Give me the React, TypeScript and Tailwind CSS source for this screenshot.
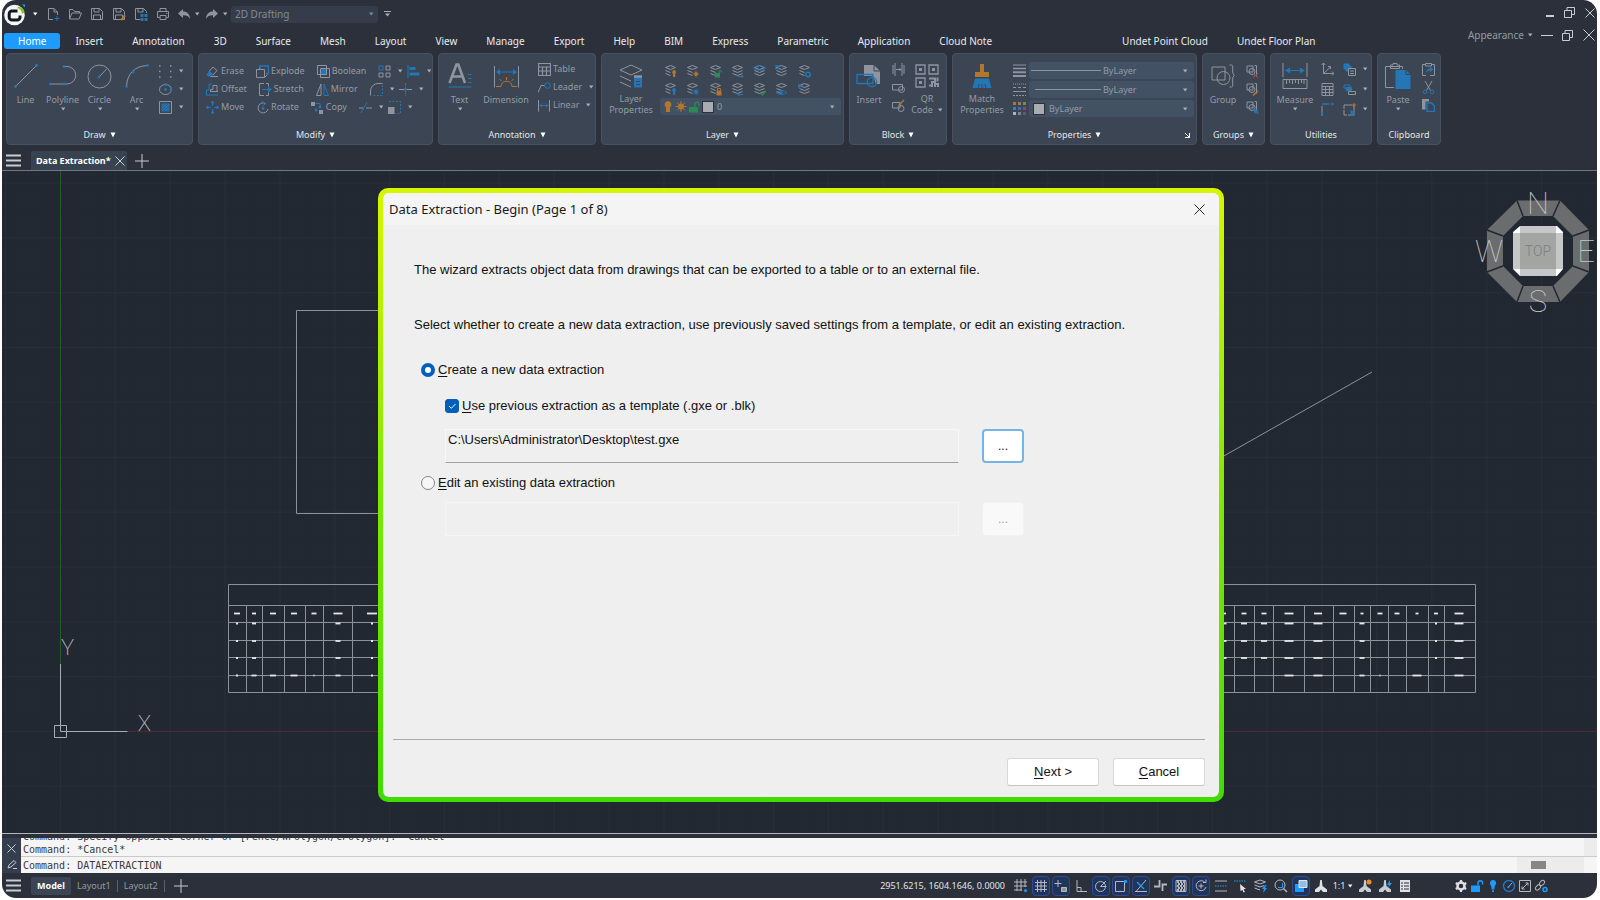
import React, { useState } from "react";
import clsx from "clsx";

const GRAY = "#8f959e";
const BLUE = "#2476b5";
const ORANGE = "#b3762e";
const GREEN = "#2c8a54";
const LIGHT = "#c9ccd1";
const AZURE = "#1e9bff";

interface SvgProps {
  w: number;
  h: number;
  stroke?: string;
  sw?: number;
  className?: string;
  children: React.ReactNode;
}

const Svg = ({ w, h, stroke = GRAY, sw = 1, className, children }: SvgProps) => (
  <svg
    width={w}
    height={h}
    viewBox={`0 0 ${w} ${h}`}
    fill="none"
    stroke={stroke}
    strokeWidth={sw}
    className={clsx("shrink-0", className)}
    aria-hidden="true"
  >
    {children}
  </svg>
);

const Caret = ({ fill = "#a9aeb6" }: { fill?: string }) => (
  <Svg w={6} h={4} stroke="none">
    <path d="M1 0.5h4.4L3.2 3.5z" fill={fill} />
  </Svg>
);

const Hamburger = () => (
  <Svg w={15} h={13} stroke={LIGHT} sw={2}>
    <path d="M0 1.5h15M0 6.5h15M0 11.5h15" />
  </Svg>
);

const Plus = () => (
  <Svg w={14} h={14} stroke={LIGHT}>
    <path d="M7 0v14M0 7h14" />
  </Svg>
);

const Cross = ({ size = 11, stroke = LIGHT }: { size?: number; stroke?: string }) => (
  <Svg w={size} h={size} stroke={stroke}>
    <path d={`M.5 .5L${size - 0.5} ${size - 0.5}M${size - 0.5} .5L.5 ${size - 0.5}`} />
  </Svg>
);

/* ---------- Title bar icons ---------- */

const Logo = () => (
  <Svg w={22} h={24} stroke="none">
    <circle cx="10.5" cy="13" r="10.3" fill="#f4f6f7" />
    <path d="M13.500 9H8a2.800 2.800 0 0 0-2.800 2.800v3.400A2.800 2.800 0 0 0 8 18h5.200a2.800 2.800 0 0 0 2.800-2.800V13.500" stroke="#14181f" strokeWidth="3" />
    <path d="M13 6c3 .6 4.800 2.500 5 6l2.500-1.800C20.300 7.500 17.500 5 14.500 4.800z" fill="#86c61c" />
    <path d="M18 2.500h3v3z" fill={AZURE} />
  </Svg>
);

const FLOPPY = "M1.500 1.500h8l3 3v8h-11zM4 1.500v3.500h5v-3.500M3.500 12.500V8h7v4.500";

const quickIcons: { label: string; icon: React.ReactNode }[] = [
  {
    label: "New",
    icon: (
      <>
        <path d="M7 12.500H2.500v-11h5.500l3.500 3.500v3M8 1.500V5h3.500" />
        <path d="M11 9v5M8.500 11.500h5" stroke={BLUE} />
      </>
    ),
  },
  { label: "Open", icon: <path d="M1.500 12V2.500h3.500l1.500 2h5V6M1.500 12l2.500-6h9.500l-2.500 6z" /> },
  { label: "Save", icon: <path d={FLOPPY} /> },
  {
    label: "Save as",
    icon: (
      <>
        <path d={FLOPPY} />
        <path d="M9 13l4-4.500" stroke={ORANGE} strokeWidth="2" />
      </>
    ),
  },
  {
    label: "Save all",
    icon: (
      <>
        <path d="M6 12.500H1.500v-11h8l3 3V6M4 1.500v3.500h5v-3.500" />
        <path d="M6.500 7h3v3h-3zM10.500 7h3v3h-3zM6.500 11h3v3h-3zM10.500 11h3v3h-3z" fill={BLUE} stroke="none" />
      </>
    ),
  },
  {
    label: "Print",
    icon: (
      <>
        <path d="M4 4.500v-3h6v3M3.500 10.500h-2v-6h11v6h-2" />
        <path d="M4 8.500h6v4H4z" />
        <path d="M10 6.500h1.500" stroke={ORANGE} />
      </>
    ),
  },
];

const Restore = () => (
  <Svg w={11} h={11} stroke={LIGHT}>
    <path d="M.5 3.500h7v7h-7zM3 3.500V.5h7.500v7H7.500" />
  </Svg>
);

/* ---------- Ribbon icons ---------- */

const dot = (x: number, y: number) => <circle cx={x} cy={y} r="1.400" fill={BLUE} stroke="none" key={`${x}-${y}`} />;

const LineIcon = () => (
  <Svg w={24} h={24}>
    <path d="M1.500 22.500L22.500 1.500" />
    {dot(1.5, 22.5)}
    {dot(22.5, 1.5)}
  </Svg>
);

const PolylineIcon = () => (
  <Svg w={28} h={22}>
    <path d="M15 1.500h3a8.700 8.700 0 0 1 0 17.500h-3M1.500 19H15" />
    {dot(15, 1.5)}
    {dot(1.5, 19)}
    {dot(15, 19)}
  </Svg>
);

const CircleIcon = () => (
  <Svg w={25} h={25}>
    <circle cx="12.500" cy="12.500" r="11.500" />
    <path d="M12.500 12.500l7.500-8" />
    {dot(12, 13)}
  </Svg>
);

const ArcIcon = () => (
  <Svg w={24} h={24}>
    <path d="M1.500 22.500C2 10 9.500 2 22.500 1.500" />
    {dot(1.5, 22.5)}
    {dot(8, 8)}
    {dot(22.5, 1.5)}
  </Svg>
);

const TextIcon = () => (
  <Svg w={24} h={26} stroke={BLUE}>
    <path d="M1.500 20L8.500 1.500h1.800L17 20M4 13.500h11" stroke={GRAY} strokeWidth="2.600" />
    <path d="M20 11.500h3.500M20 15.500h3.500M20 19.500h3.500M.5 24h23" />
  </Svg>
);

const DimensionIcon = () => (
  <Svg w={25} h={24}>
    <path d="M.5 2v21.500M24.500 2v21.500" />
    <path d="M3 8h19" stroke={BLUE} />
    <path d="M2 8l4-3v6zM23 8l-4-3v6z" fill={BLUE} stroke="none" />
    <path d="M2 22.500h5c0-7 11-7 11 0h5M12.500 13v3M5.500 15l2 2M19.500 15l-2 2" stroke={ORANGE} />
  </Svg>
);

const LayersIcon = () => (
  <Svg w={24} h={24}>
    <path d="M12 1l11 5-11 5L1 6zM1 12l11 5M1 18l11 5" />
    <path d="M15 12.500h8v11h-8z" fill={BLUE} stroke="none" />
    <path d="M15 12.500h8" strokeWidth="2.500" />
    <path d="M17 17.500h4M17 20.500h4" stroke="#3b4554" />
  </Svg>
);

const InsertIcon = () => (
  <Svg w={26} h={24}>
    <path d="M8 1h10l6 6v13h-4l-3-8H8z" fill={GRAY} stroke="none" />
    <path d="M18 1v6h6" stroke="#3b4554" />
    <path d="M1 10.500h16v9H1z" stroke={BLUE} strokeWidth="1.300" />
    <circle cx="16" cy="18" r="4.700" stroke={BLUE} strokeWidth="1.300" />
  </Svg>
);

const QrIcon = () => (
  <Svg w={24} h={24}>
    <path d="M1 1h9v9H1zM14 1h9v9h-9zM1 14h9v9H1z" strokeWidth="1.300" />
    <path d="M4 4h3v3H4zM17 4h3v3h-3zM4 17h3v3H4z" fill={GRAY} stroke="none" />
    <path d="M14 14.500h6v3.500h-3v5M22.500 13.500v4M14 21.500h2M20 23v-3h3v3" strokeWidth="2" />
  </Svg>
);

const BrushIcon = () => (
  <Svg w={20} h={24} stroke="none">
    <path d="M8 0h4v8h5v5H3V8h5z" fill={ORANGE} />
    <path d="M3 14.500h14l2.500 9.500H.5z" fill={BLUE} />
    <path d="M6 24l1-4M10 24v-4M14 24l-1-4" stroke="#3b4554" />
  </Svg>
);

const GroupIcon = () => (
  <Svg w={24} h={24}>
    <path d="M1 3h13v13H1z" />
    <circle cx="12.500" cy="14" r="6.500" />
    <path d="M18.500 1h2c1 0 1.200.5 1.200 1.500V9l1.500 2.500-1.500 2.500v7.500c0 1-.2 1.500-1.200 1.500h-2" />
  </Svg>
);

const MeasureIcon = () => (
  <Svg w={26} h={26}>
    <path d="M1 0v14M25 0v14M1 16.500h24v9H1zM4.500 17v4M7.500 17v3M10.500 17v4M13.500 17v3M16.500 17v4M19.500 17v3M22 17v4" />
    <path d="M4 7.500h18" stroke={BLUE} />
    <path d="M3 7.500l5-3v6zM23 7.500l-5-3v6z" fill={BLUE} stroke="none" />
  </Svg>
);

const PasteIcon = () => (
  <Svg w={26} h={26}>
    <path d="M9 24.500H.5v-21h17V6" />
    <path d="M5.500 2h2.500v-1.500h4V2h2.500v3.500h-9z" />
    <path d="M10.500 7h10.500l4.500 4.500V26h-15z" fill={BLUE} stroke="none" />
    <path d="M21 7v4.500h4.500" stroke="#3b4554" />
  </Svg>
);

/* small 13px icons */
const small: Record<string, React.ReactNode> = {
  points: (
    <path
      d="M0 1h1.500M11 1h1.500M0 6.500h1.500M11 6.500h1.500M0 12h1.500M11 12h1.500"
      strokeWidth="1.500"
    />
  ),
  ellipse: (
    <>
      <ellipse cx="6.500" cy="6.500" rx="6" ry="5" />
      {dot(6.5, 6.5)}
      {dot(6.5, 1.5)}
      {dot(12, 6.5)}
    </>
  ),
  hatch: (
    <>
      <path d="M.5 .5h12v12H.5z" />
      <path d="M2.500 2.500h8v8h-8z" fill={BLUE} stroke="none" />
      <path d="M3 6l3-3M3 9l6-6M5 10l5-5M8 10l2-2" stroke="#3b4554" strokeWidth=".5" />
    </>
  ),
  erase: (
    <>
      <path d="M7 2l4 3.500-4 4.500-4-3.500zM4 11.500h8" />
      <path d="M3.500 6l3.500 3.500-2 2H2L.5 9.500z" fill={BLUE} stroke="none" />
    </>
  ),
  offset: (
    <>
      <path d="M4.500 8.500v-2H7v-4h4v6zM4 8.500h8" />
      <path d="M.5 12.500V7H3V1h3M.5 12H12" stroke={BLUE} />
    </>
  ),
  move: (
    <>
      <path d="M6.500 1v4M6.500 8v4M1 6.500h4M8 6.500h4" stroke={BLUE} />
      {dot(6.5, 1.5)}
      {dot(6.5, 11.5)}
      {dot(1.5, 6.5)}
      {dot(11.5, 6.5)}
    </>
  ),
  explode: (
    <>
      <path d="M.5 4.500h8v8h-8zM3.500 4V2M8.500 12.500l3-3" />
      <path d="M4 3.500V1h8.500v7.500H10" stroke={BLUE} strokeWidth="1.500" />
    </>
  ),
  stretch: (
    <>
      <path d="M5 .5H.5v12H5M7 .5h2.500v3M7 12.500h2.500v-3" />
      <path d="M3 6.500h8" stroke={BLUE} />
      <path d="M13 6.500L9 3.500v6z" fill={BLUE} stroke="none" />
    </>
  ),
  rotate: (
    <>
      <path d="M9.500 2.500A5 5 0 1 0 12 8" />
      <path d="M5.500 0l4 2.500-3 3" stroke={BLUE} />
      {dot(7, 7.5)}
    </>
  ),
  boolean: (
    <>
      <path d="M.5 .5h9v9h-9zM3.500 3.500h9v9h-9z" />
      <path d="M4.500 4.500h4v4h-4z" fill={BLUE} stroke={BLUE} />
    </>
  ),
  mirror: (
    <>
      <path d="M5 1v11.500H.5z" />
      <path d="M8 1v11.500h4.500z" stroke={BLUE} />
    </>
  ),
  copy: (
    <>
      <path d="M0 1h4v4H0zM8 9h4v4H8z" fill={GRAY} stroke="none" />
      <path d="M4.500 2.500h4.500v4" stroke={BLUE} />
      {dot(9, 6)}
      {dot(5, 9)}
    </>
  ),
  array: (
    <>
      <path d="M1 1h4v4H1z" stroke={BLUE} />
      <path d="M8 1h4v4H8zM1 8h4v4H1zM8 8h4v4H8z" />
    </>
  ),
  align: (
    <>
      <path d="M1 0v13" stroke={BLUE} />
      <path d="M2.500 2h6v3h-6zM2.500 7.500h10v3h-10z" fill={BLUE} stroke="none" />
    </>
  ),
  fillet: (
    <>
      <path d="M.5 12.500V8A7.500 7.500 0 0 1 8 .5h4.500" />
      <path d="M12.500 2v10.500H2" strokeDasharray="2 1.500" stroke={BLUE} />
    </>
  ),
  breakAt: (
    <>
      <path d="M0 6.500h13" />
      <path d="M6.500 0v13" stroke={BLUE} strokeDasharray="3 1" />
      {dot(6.5, 6.5)}
    </>
  ),
  trim: (
    <>
      <path d="M2 12L8 1" stroke={BLUE} />
      <path d="M0 7h4M7 7h6" />
    </>
  ),
  scale: (
    <>
      <path d="M1 .5h11.500v12H7" strokeDasharray="2 1.500" stroke={BLUE} />
      <path d="M0 6h6.500v7H0z" fill={GRAY} stroke="none" />
    </>
  ),
  table: <path d="M.5 .5h12v12H.5zM.5 4h12M.5 8h12M4.500 4v8.500M8.500 4v8.500" strokeWidth="1.200" />,
  leader: (
    <>
      <path d="M0 11.500l3-7 4 0" />
      <circle cx="9.500" cy="4.500" r="2.800" stroke={BLUE} />
    </>
  ),
  linear: (
    <>
      <path d="M.5 1v11.500M11.500 1v11.500" />
      <path d="M2 6.500h8M4 4.500l-2 2 2 2M8 4.500l2 2-2 2" stroke={BLUE} />
    </>
  ),
  blockArrow: <path d="M1 2v9M3 0v13M10 0v13M12 2v9M4 6.500h5M7.500 5l1.500 1.500L7.500 8" />,
  blockEdit: (
    <>
      <path d="M.5 3.500h10v5.500H.5z" />
      <circle cx="9.500" cy="8.500" r="3" />
    </>
  ),
  blockPen: (
    <>
      <path d="M.5 3.500h7.500v5.500H.5z" />
      <circle cx="9" cy="9.500" r="3" />
      <path d="M6.500 6.500L12 1" stroke={ORANGE} strokeWidth="1.500" />
    </>
  ),
  lineweight: (
    <>
      <path d="M0 1h13" />
      <path d="M0 4.500h13" strokeWidth="1.500" />
      <path d="M0 8.300h13M0 12h13" strokeWidth="2" />
    </>
  ),
  linetype: (
    <>
      <path d="M0 1h13" strokeDasharray="1 1" />
      <path d="M0 4.500h13" strokeDasharray="3 2" />
      <path d="M0 8.500h13" />
      <path d="M0 12.500h13" strokeDasharray="2 1" />
    </>
  ),
  colors: (
    <g stroke="none">
      <path d="M0 0h3v3H0z" fill="#b3762e" />
      <path d="M5 0h3v3H5z" fill="#a07a55" />
      <path d="M10 0h3v3h-3z" fill="#5f9a4b" />
      <path d="M0 5h3v3H0z" fill="#4c78b0" />
      <path d="M5 5h3v3H5z" fill="#3c6ab5" />
      <path d="M10 5h3v3h-3z" fill="#97416b" />
      <path d="M0 10h3v3H0z" fill="#b0b4ba" />
      <path d="M5 10h3v3H5z" fill="#7d838c" />
      <path d="M10 10h3v3h-3z" fill="#59606b" />
    </g>
  ),
  axes: <path d="M2.500 0v10.500H13M2.500 10.500l7-6.500M.5 2l2-2 2 2M11 8.500l2 2-2 2M7 3.500h2.500V6" />,
  calc: <path d="M1 .5h11v12H1zM1 3.500h11M1 6.500h11M1 9.500h11M4.500 3.500v9M8.500 3.500v9" />,
  corner: (
    <>
      <path d="M1 3v10" />
      <path d="M1 1h12" stroke={BLUE} strokeDasharray="7 1.500" strokeWidth="1.500" />
      <path d="M1 9v4" stroke={BLUE} strokeWidth="1.500" />
    </>
  ),
  selectAll: (
    <>
      <path d="M1 1h5v5H1zM3 3h5v5H3z" fill={BLUE} stroke={BLUE} />
      <path d="M5.500 5.500h7v7h-7z" fill="#3b4554" />
      <path d="M7 8h4M7 10.500h4" />
    </>
  ),
  selectSimilar: (
    <>
      <path d="M1 2h6v3H1z" stroke={BLUE} />
      <path d="M3 4.500h5.500v3H3z" fill={BLUE} stroke={BLUE} />
      <path d="M5.500 8.500h7v3h-7z" />
    </>
  ),
  quickSelect: (
    <>
      <path d="M1 2h10v10H1z" strokeDasharray="8 1" />
      <path d="M11 0v5M9 2h4" stroke={ORANGE} />
      <path d="M7 7l5.500 2.500-2 .8 1.500 2-1.500.7-1.300-2-1.200 1.500z" fill={BLUE} stroke="none" />
    </>
  ),
  pasteSpecial: (
    <>
      <path d="M4 12.500H.5v-11h3M10 1.500h2.500v11H8M3.500 .5h6v2.500h-6z" />
      <path d="M4 10c0-3 1.500-4.500 4-4.500V3.500l3.500 3-3.500 3V7.500C6 7.500 5 8.500 4 10z" fill={BLUE} stroke="none" />
    </>
  ),
  cut: (
    <>
      <path d="M3 0l5.500 9.500M10 0L4.500 9.500" />
      <circle cx="3" cy="10.800" r="1.800" stroke={BLUE} />
      <circle cx="10" cy="10.800" r="1.800" stroke={BLUE} />
    </>
  ),
  copyClip: (
    <>
      <path d="M0 0h7v2.500H3.500v8H0z" fill={GRAY} stroke="none" />
      <path d="M5 4h4.500L12.500 7v5.500H5z" stroke={BLUE} strokeWidth="1.500" />
    </>
  ),
};

const MINI_GROUP = "M1 1h6v6H1zM8.500 .5h2v10h-2";

const groupIcons = [
  <path d="M7 8l5 5M12 8l-5 5" stroke="#a8483f" key="x" />,
  <path d="M7 12.500l5-4.500" stroke={ORANGE} strokeWidth="1.500" key="e" />,
  <path d="M7 7l6 2.500-2 1 2 2-1 1-2-2-1 1.500z" fill={BLUE} stroke="none" key="s" />,
];

const Small = ({ name }: { name: string }) => (
  <Svg w={13} h={13}>
    {small[name]}
  </Svg>
);

const STACK = "M6.500 .5l5 2-5 2-5-2zM1.500 5.500l5 2 5-2M1.500 8.500l5 2 5-2";
const STACK_CUT = "M6.500 .5l5 2-5 2-5-2zM1.500 5.500l5 2M1.500 8.500l5 2";

const layerIcons: { label: string; full?: boolean; mark: React.ReactNode }[] = [
  { label: "Layer off", mark: <path d="M10 5a2.300 2.300 0 0 1 1.200 4V12H9V9A2.300 2.300 0 0 1 10 5z" fill={ORANGE} stroke="none" /> },
  { label: "Freeze layer", mark: <><circle cx="10" cy="9" r="2" fill={ORANGE} stroke="none" /><path d="M10 5.500v7M6.500 9h7" stroke={ORANGE} strokeWidth=".7" /></> },
  { label: "Unlock layer", mark: <><path d="M6 8h5v4.500H6z" fill={GREEN} stroke="none" /><path d="M10 8V6h3v2" stroke={GREEN} /></> },
  { label: "Match layer", full: true, mark: <path d="M7 11.500h5M10.500 10l1.500 1.500L10.500 13" stroke={BLUE} /> },
  { label: "Isolate layer", full: true, mark: <path d="M.5 3c3-3 9-3 12 0-3 3-9 3-12 0z" stroke={BLUE} /> },
  { label: "Previous layer", full: true, mark: <path d="M0 1h5M0 3.500h4" stroke={BLUE} strokeWidth="1.300" /> },
  { label: "Layer state", mark: <circle cx="10" cy="9.500" r="2.200" stroke={BLUE} strokeWidth="1.500" /> },
  { label: "Layer on", mark: <path d="M10 5a2.300 2.300 0 0 1 1.200 4V12H9V9A2.300 2.300 0 0 1 10 5z" fill={BLUE} stroke="none" /> },
  { label: "Thaw layer", mark: <><circle cx="10" cy="9" r="2" fill={BLUE} stroke="none" /><path d="M10 5.500v7M6.500 9h7M7.500 6.500l5 5M12.500 6.500l-5 5" stroke={BLUE} strokeWidth=".7" /></> },
  { label: "Lock layer", mark: <><path d="M7.500 7.500h5v5h-5z" fill={ORANGE} stroke="none" /><path d="M8.500 7.500V5.500h3v2" stroke={ORANGE} /></> },
  { label: "Change to current layer", full: true, mark: <path d="M7 11.500h5M8.500 10L7 11.500 8.500 13" stroke={BLUE} /> },
  { label: "Make current", full: true, mark: <path d="M7.500 10l2 2 3.500-4" stroke={GREEN} strokeWidth="1.300" /> },
  { label: "Walk layers", mark: <><path d="M1 9.500c3-2.500 8-2.500 11 0-3 2.500-8 2.500-11 0z" stroke={BLUE} /><circle cx="6.500" cy="9.500" r="1" fill={BLUE} stroke={BLUE} /></> },
  { label: "Restore layer", full: true, mark: <path d="M0 3h5M1.500 1L0 3l1.500 2" stroke={BLUE} strokeWidth="1.300" /> },
];

/* ---------- Ribbon building blocks ---------- */

interface PanelProps {
  title: string;
  width: string;
  arrow?: boolean;
  launcher?: boolean;
  children: React.ReactNode;
}

const Panel = ({ title, width, arrow = true, launcher, children }: PanelProps) => (
  <section
    className={clsx(
      "relative flex h-[92px] shrink-0 flex-col rounded-[4px] border border-[#475160] bg-[#3b4554]",
      width
    )}
  >
    <div className="flex flex-1 items-start">{children}</div>
    <button className="flex h-[18px] items-center justify-center gap-1 text-[9px] text-[#e3e5e8]">
      {title}
      {arrow && (
        <Svg w={6} h={6} stroke="none">
          <path d="M.5 .5h5L3 5.500z" fill="#fff" />
        </Svg>
      )}
    </button>
    {launcher && (
      <Svg w={5} h={5} stroke="#fff" className="absolute right-1.5 bottom-1.5">
        <path d="M0 0l4 4M4.500 0v4.500H0" />
      </Svg>
    )}
  </section>
);

interface BigButtonProps {
  icon: React.ReactNode;
  label: string;
  second?: string;
  width: string;
  caret?: boolean;
}

const BigButton = ({ icon, label, second, width, caret }: BigButtonProps) => (
  <button className={clsx("flex shrink-0 flex-col items-center pt-2", width)}>
    <span className="flex h-7 items-center">{icon}</span>
    {second ? (
      <span className="mt-[3px] leading-[11px]">
        {label}
        <br />
        <span className="flex items-center justify-center gap-1">
          {second}
          {caret && <Caret />}
        </span>
      </span>
    ) : (
      <>
        <span className="mt-[3px] leading-[14px]">{label}</span>
        {caret && <Caret />}
      </>
    )}
  </button>
);

const Tool = ({ icon, label, caret }: { icon: string; label?: string; caret?: boolean }) => (
  <button className="flex h-[18px] items-center gap-0.5" aria-label={label ?? icon}>
    <Small name={icon} />
    {label}
    {caret && (
      <span className="ml-1">
        <Caret />
      </span>
    )}
  </button>
);

const SelectBox = ({ id, value, children }: { id: string; value: string; children?: React.ReactNode }) => (
  <div className="flex h-[17px] items-center rounded-[3px] bg-[#435164] pr-1.5">
    {children}
    <select id={id} aria-label={id} className="min-w-0 flex-1 appearance-none bg-transparent text-[9px] leading-4 outline-none">
      <option>{value}</option>
    </select>
    <Caret />
  </div>
);

const Swatch = ({ className }: { className?: string }) => (
  <span className={clsx("size-3 shrink-0 border border-[#2b303b] bg-[#a9abaf]", className)} />
);

const Ribbon = () => (
  <div className="flex gap-[5px] overflow-hidden pl-1 text-[9px] text-[#959ba4]">
    <Panel title="Draw" width="w-[187px]">
      <BigButton icon={<LineIcon />} label="Line" width="w-[37px]" />
      <BigButton icon={<PolylineIcon />} label="Polyline" width="w-[37px]" caret />
      <BigButton icon={<CircleIcon />} label="Circle" width="w-[37px]" caret />
      <BigButton icon={<ArcIcon />} label="Arc" width="w-[37px]" caret />
      <div className="pt-2 pl-1">
        <Tool icon="points" caret />
        <Tool icon="ellipse" caret />
        <Tool icon="hatch" caret />
      </div>
    </Panel>

    <Panel title="Modify" width="w-[235px]">
      <div className="pt-2 pl-[7px]">
        <div className="flex gap-3">
          <Tool icon="erase" label="Erase" />
          <Tool icon="explode" label="Explode" />
          <Tool icon="boolean" label="Boolean" />
          <div className="flex gap-1">
            <Tool icon="array" caret />
            <Tool icon="align" caret />
          </div>
        </div>
        <div className="flex gap-3">
          <Tool icon="offset" label="Offset" />
          <Tool icon="stretch" label="Stretch" />
          <Tool icon="mirror" label="Mirror" />
          <div className="flex gap-1">
            <Tool icon="fillet" caret />
            <Tool icon="breakAt" caret />
          </div>
        </div>
        <div className="flex gap-3">
          <Tool icon="move" label="Move" />
          <Tool icon="rotate" label="Rotate" />
          <Tool icon="copy" label="Copy" />
          <div className="flex gap-1">
            <Tool icon="trim" caret />
            <Tool icon="scale" caret />
          </div>
        </div>
      </div>
    </Panel>

    <Panel title="Annotation" width="w-[158px]">
      <BigButton icon={<TextIcon />} label="Text" width="w-[41px]" caret />
      <BigButton icon={<DimensionIcon />} label="Dimension" width="w-[52px]" />
      <div className="pt-1.5 pl-1.5">
        <Tool icon="table" label="Table" />
        <Tool icon="leader" label="Leader" caret />
        <Tool icon="linear" label="Linear" caret />
      </div>
    </Panel>

    <Panel title="Layer" width="w-[243px]">
      <BigButton icon={<LayersIcon />} label="Layer" second="Properties" width="w-[58px]" />
      <div className="w-[181px] pt-2">
        <div className="grid w-[156px] grid-cols-7">
          {layerIcons.map((l) => (
            <button key={l.label} aria-label={l.label} className="flex h-[18px] items-center pl-1">
              <Svg w={13} h={13}>
                <path d={l.full ? STACK : STACK_CUT} />
                {l.mark}
              </Svg>
            </button>
          ))}
        </div>
        <SelectBox id="layer" value="0">
          <Svg w={38} h={13} stroke="none" className="ml-0.5">
            <path d="M6 1a3.500 3.500 0 0 1 2 6.300V12H4V7.300A3.500 3.500 0 0 1 6 1z" fill={ORANGE} />
            <circle cx="19" cy="6.500" r="3" fill={ORANGE} />
            <path d="M19 1v11M13.500 6.500h11M15 2.500l8 8M23 2.500l-8 8" stroke={ORANGE} />
            <path d="M27 7h9v5.500h-9z" fill={GREEN} />
            <path d="M33 7V4a2 2 0 0 1 4 0v2" stroke={GREEN} strokeWidth="1.300" />
          </Svg>
          <Swatch className="mr-[3px] ml-0.5" />
        </SelectBox>
      </div>
    </Panel>

    <Panel title="Block" width="w-[98px]">
      <BigButton icon={<InsertIcon />} label="Insert" width="w-[38px]" />
      <div className="flex w-5 flex-col items-center pt-1.5">
        <Tool icon="blockArrow" />
        <Tool icon="blockEdit" />
        <Tool icon="blockPen" />
      </div>
      <BigButton icon={<QrIcon />} label="QR" second="Code" width="w-[38px]" caret />
    </Panel>

    <Panel title="Properties" width="w-[245px]" launcher>
      <BigButton icon={<BrushIcon />} label="Match" second="Properties" width="w-[58px]" />
      <div className="grid flex-1 grid-cols-[13px_1fr] items-center gap-x-[3px] gap-y-0.5 pt-2 pr-0.5 pl-0.5">
        <Small name="lineweight" />
        <SelectBox id="lineweight" value="ByLayer">
          <span className="mr-0.5 ml-0.5 h-px w-[70px] bg-[#8f959e]" />
        </SelectBox>
        <Small name="linetype" />
        <SelectBox id="linetype" value="ByLayer">
          <span className="mr-0.5 ml-1.5 h-px w-[66px] bg-[#8f959e]" />
        </SelectBox>
        <Small name="colors" />
        <SelectBox id="color" value="ByLayer">
          <Swatch className="mx-1" />
        </SelectBox>
      </div>
    </Panel>

    <Panel title="Groups" width="w-[63px]">
      <BigButton icon={<GroupIcon />} label="Group" width="w-10" />
      <div className="flex flex-col pt-2 pl-[3px]">
        {groupIcons.map((mark, i) => (
          <button key={i} aria-label="Group tool" className="flex h-[18px] items-center">
            <Svg w={13} h={13}>
              <path d={MINI_GROUP} />
              <circle cx="6" cy="6.500" r="3" />
              {mark}
            </Svg>
          </button>
        ))}
      </div>
    </Panel>

    <Panel title="Utilities" width="w-[102px]" arrow={false}>
      <BigButton icon={<MeasureIcon />} label="Measure" width="w-12" caret />
      <div className="grid grid-cols-[22px_26px] gap-y-0.5 pt-1.5 pl-0.5">
        <Tool icon="axes" />
        <Tool icon="selectAll" caret />
        <Tool icon="calc" />
        <Tool icon="selectSimilar" caret />
        <Tool icon="corner" />
        <Tool icon="quickSelect" caret />
      </div>
    </Panel>

    <Panel title="Clipboard" width="w-[64px]" arrow={false}>
      <BigButton icon={<PasteIcon />} label="Paste" width="w-10" caret />
      <div className="flex w-5 flex-col items-center pt-1.5">
        <Tool icon="pasteSpecial" />
        <Tool icon="cut" />
        <Tool icon="copyClip" />
      </div>
    </Panel>
  </div>
);

/* ---------- Header ---------- */

const tabs = [
  "Home", "Insert", "Annotation", "3D", "Surface", "Mesh", "Layout", "View", "Manage",
  "Export", "Help", "BIM", "Express", "Parametric", "Application", "Cloud Note",
];

const Header = () => (
  <header className="flex h-[53px] shrink-0 justify-between">
    <div>
      <div className="flex h-7 items-center pl-0.5">
        <Logo />
        <span className="flex w-4 justify-center pl-0.5">
          <Caret fill="#fff" />
        </span>
        {quickIcons.map((q) => (
          <button key={q.label} aria-label={q.label} className="flex w-[22px] justify-center">
            <Svg w={14} h={14}>{q.icon}</Svg>
          </button>
        ))}
        <button aria-label="Undo" className="flex w-[26px] items-center justify-end gap-1">
          <Svg w={12} h={10} stroke="none">
            <path d="M5 0v2.500C9 2.500 12 5 12 10 10.500 7.200 8.500 6.200 5 6.300V9L0 4.500z" fill={GRAY} />
          </Svg>
          <Caret />
        </button>
        <button aria-label="Redo" className="flex w-7 items-center justify-end gap-1">
          <Svg w={12} h={10} stroke="none">
            <path d="M7 0v2.500C3 2.500 0 5 0 10c1.500-2.800 3.500-3.800 7-3.700V9l5-4.500z" fill={GRAY} />
          </Svg>
          <Caret />
        </button>
        <div className="ml-[3px] flex h-[17px] w-[147px] items-center rounded-[3px] bg-[#353d4a] px-1">
          <select aria-label="Workspace" className="flex-1 appearance-none bg-transparent text-[10px] leading-4 text-[#838a94] outline-none">
            <option>2D Drafting</option>
          </select>
          <Caret fill="#838a94" />
        </div>
        <Svg w={7} h={6} stroke="#a9aeb6" className="ml-1.5">
          <path d="M0 .5h7" />
          <path d="M1 2.500h5L3.500 5.500z" fill="#a9aeb6" stroke="none" />
        </Svg>
      </div>
      <nav className="flex gap-px pt-[5px] pl-0.5 text-[10px] leading-4 text-[#e8eaed]">
        {tabs.map((t) => (
          <button key={t} className={clsx("rounded-[3px] px-3.5", t === "Home" && "bg-[#1e9bff] text-white")}>
            {t}
          </button>
        ))}
        <button className="ml-[101px] px-3.5">Undet Point Cloud</button>
        <button className="px-3.5">Undet Floor Plan</button>
      </nav>
    </div>

    <div className="flex flex-col items-end">
      <div className="flex h-[25px] items-center gap-2.5 pr-0.5">
        <button aria-label="Minimize" className="mt-1.5 h-0.5 w-2 bg-[#c9ccd1]" />
        <button aria-label="Restore"><Restore /></button>
        <button aria-label="Close"><Cross size={10} /></button>
      </div>
      <div className="flex h-5 items-center pr-0.5 text-[10px] text-[#959ba4]">
        <button className="flex items-center gap-[3px]">
          Appearance
          <Caret />
        </button>
        <button aria-label="Minimize drawing" className="ml-2 h-px w-3 bg-[#c9ccd1]" />
        <button aria-label="Restore drawing" className="ml-[9px]"><Restore /></button>
        <button aria-label="Close drawing" className="ml-2.5"><Cross size={12} /></button>
      </div>
    </div>
  </header>
);

/* ---------- Drawing area ---------- */

const colsLeft = [246.5, 262.5, 284.5, 305.5, 323.5, 352.5];
const colsRight = [1234.5, 1254.5, 1273.5, 1304.5, 1333.5, 1354.5, 1370.5, 1388.5, 1406.5, 1428.5, 1444.5];
const rowLines = [605.5, 622.5, 640.5, 657.5, 675.5];

// [centre x, width] of the text strokes in each table row
const headMarks = [
  [237, 6], [254, 4], [273, 6], [294, 6], [314, 5], [338, 9], [372, 10], [1224, 4], [1244, 5], [1264, 5], [1289, 9],
  [1318, 8], [1343, 7], [1362, 3], [1380, 5], [1397, 5], [1417, 3], [1436, 4], [1459, 9],
];
const bodyMarks = [
  [237, 2], [254, 4], [338, 5], [372, 2], [1225, 3], [1244, 6], [1264, 6], [1289, 9], [1318, 9], [1362, 5], [1436, 2], [1459, 9],
];
const lastMarks = [
  [237, 2], [254, 5], [273, 6], [294, 7], [314, 1], [338, 5], [372, 2], [1289, 9], [1318, 9], [1362, 5], [1380, 1], [1417, 9], [1459, 9],
];
const markRows = [
  { y: 613.5, marks: headMarks },
  { y: 623.5, marks: bodyMarks },
  { y: 641, marks: bodyMarks },
  { y: 658, marks: bodyMarks },
  { y: 675.5, marks: lastMarks },
];

const Drawing = () => (
  <svg className="absolute inset-0 size-full" aria-hidden="true">
    <defs>
      <pattern id="minor" x="58.500" y="560.500" width="10.970" height="10.970" patternUnits="userSpaceOnUse">
        <path d="M0 0H11M0 0V11" stroke="#242a34" />
      </pattern>
      <pattern id="major" x="58" y="560" width="54.850" height="54.850" patternUnits="userSpaceOnUse">
        <path d="M0 .5H55M.5 0V55" stroke="#272e39" />
      </pattern>
    </defs>
    <rect width="100%" height="100%" fill="url(#minor)" />
    <rect width="100%" height="100%" fill="url(#major)" />
    <g transform="translate(-2 -171)" fill="none" stroke="#8d9198">
      <path d="M60.500 171v493" stroke="#275a2c" />
      <path d="M128 731.500h3000" stroke="#502b33" />
      <path d="M60.500 664v67.500H127.500M54.500 725.500h12v12h-12z" stroke="#a8acb1" />
      <path d="M600 310.500H296.500v203H600M1200 469.500l172-97.500" />
      <path d="M228.500 584.500H1475.500V692.500H228.500z" />
      {rowLines.map((y) => (
        <path key={y} d={`M228.500 ${y}H1475.500`} />
      ))}
      {[...colsLeft, ...colsRight].map((x) => (
        <path key={x} d={`M${x} 605.500V692.500`} />
      ))}
      {markRows.map((r) =>
        r.marks.map(([x, w]) => (
          <path key={`${r.y}-${x}`} d={`M${x - w / 2} ${r.y}h${w}`} stroke="#e6e7e9" strokeWidth="1.800" />
        ))
      )}
      <g fill="#b4b7bc" stroke="none" fontFamily="Roboto, sans-serif" fontWeight="200" fontSize="22" textAnchor="middle">
        <text x="67.500" y="655">Y</text>
        <text x="144.500" y="731">X</text>
      </g>
    </g>
  </svg>
);

const Compass = () => (
  <svg width="125" height="136" viewBox="0 0 125 136" className="absolute top-3 right-0" aria-label="View compass">
    <path
      fillRule="evenodd"
      fill="#6b6c6e"
      d="M45 17.500h43l29 29.500v42l-29 30H45L15 89V47zM51 33L31 53v30l20 20h30l20-20V53L81 33z"
    />
    <path
      d="M45 17.500L51 33M88 17.500L81 33M117 47l-16 6M117 89l-16-6M88 119l-7-16M45 119l6-16M15 89l16-6M15 47l16 6"
      stroke="#222831"
      strokeWidth="1.500"
    />
    <path d="M48 43h37l6 6v37l-6 7H48l-7-7V49z" fill="#fff" />
    <path d="M48 43h36v7H48zM41 50h7v36h-7zM84 50h7v36h-7zM48 86h36v7H48z" fill="#c6c7c8" />
    <path d="M48 50h36v36H48z" fill="#a3a5a3" />
    <g fill="#c4c6c9" fontFamily="Roboto, sans-serif" fontWeight="100" textAnchor="middle">
      <text x="66" y="73" fontSize="14" fontWeight="300" fill="#7c7e80">TOP</text>
      <text x="66" y="31" fontSize="31">N</text>
      <text x="17" y="79" fontSize="31">W</text>
      <text x="114" y="79" fontSize="31">E</text>
      <text x="66" y="129" fontSize="31">S</text>
    </g>
  </svg>
);

/* ---------- Data extraction dialog ---------- */

const U = ({ children }: { children: React.ReactNode }) => (
  <span className="underline underline-offset-2">{children}</span>
);

const radioClass =
  "size-3.5 shrink-0 appearance-none rounded-full border border-[#868686] bg-[#f6f6f6] checked:border-4 checked:border-[#005fb8] checked:bg-white";
const dialogButton =
  "h-7 w-[92px] rounded-[3px] border border-[#d8d8d8] border-b-[#c4c4c4] bg-white";

const DataExtractionDialog = () => {
  const [mode, setMode] = useState("create");
  const [useTemplate, setUseTemplate] = useState(true);

  return (
    <div
      role="dialog"
      aria-labelledby="dialog-title"
      className="flex h-[614px] w-[846px] flex-col rounded-[10px] bg-linear-to-b from-[#d6f600] via-[#7de900] to-[#40dc00] p-[5px]"
    >
      <div className="flex flex-1 flex-col overflow-hidden rounded-md bg-[#efefef] font-['Liberation_Sans',sans-serif] text-[13px] leading-[18px] text-[#111]">
        <div className="flex h-8 items-center justify-between bg-[#f4f4f4] pr-3.5 pl-1.5">
          <h1 id="dialog-title" className="font-['Noto_Sans',sans-serif] text-[13px] text-[#1a1a1a]">
            Data Extraction - Begin (Page 1 of 8)
          </h1>
          <button aria-label="Close dialog">
            <Cross stroke="#222" />
          </button>
        </div>

        <p className="mt-9 pl-[31px]">
          The wizard extracts object data from drawings that can be exported to a table or to an external file.
        </p>
        <p className="mt-[37px] pl-[31px]">
          Select whether to create a new data extraction, use previously saved settings from a template, or edit an
          existing extraction.
        </p>

        <label className="mt-[27px] flex items-center gap-[3px] pl-[38px]">
          <input type="radio" name="mode" className={radioClass} checked={mode === "create"} onChange={() => setMode("create")} />
          <span><U>C</U>reate a new data extraction</span>
        </label>

        <label className="mt-[18px] flex items-center gap-[3px] pl-[62px]">
          <span className="relative flex">
            <input
              type="checkbox"
              className="size-3.5 appearance-none rounded-[3px] border border-[#868686] bg-white checked:border-[#005fb8] checked:bg-[#005fb8]"
              checked={useTemplate}
              onChange={(e) => setUseTemplate(e.target.checked)}
            />
            {useTemplate && (
              <Svg w={14} h={14} stroke="#fff" className="pointer-events-none absolute inset-0">
                <path d="M4 7l2.300 2.300L10.500 5" />
              </Svg>
            )}
          </span>
          <span><U>U</U>se previous extraction as a template (.gxe or .blk)</span>
        </label>

        <div className="mt-3.5 flex items-center gap-[23px] pl-[62px]">
          <input
            aria-label="Template file"
            readOnly
            value="C:\Users\Administrator\Desktop\test.gxe"
            className="h-[34px] w-[514px] border border-[#f7f7f7] border-b-[#a0a0a0] bg-transparent pb-3.5 pl-0.5 outline-none"
          />
          <button aria-label="Browse template" className="h-[34px] w-[42px] rounded-[4px] border-2 border-[#74b4e6] bg-white text-xs">
            ...
          </button>
        </div>

        <label className="mt-[11px] flex items-center gap-[3px] pl-[38px]">
          <input type="radio" name="mode" className={radioClass} checked={mode === "edit"} onChange={() => setMode("edit")} />
          <span><U>E</U>dit an existing data extraction</span>
        </label>

        <div className="mt-2.5 flex items-center gap-[23px] pl-[62px]">
          <input
            aria-label="Extraction file"
            disabled
            className="h-[34px] w-[514px] border border-[#f5f5f5] bg-transparent"
          />
          <button aria-label="Browse extraction" disabled className="h-[34px] w-[42px] rounded-[4px] border border-[#f2f2f2] bg-[#f9f9f9] text-xs text-[#999]">
            ...
          </button>
        </div>

        <div className="mt-auto mr-3.5 ml-2.5 border-t border-[#a9a9a9]" />
        <div className="flex justify-end gap-3.5 px-3.5 pt-[18px] pb-[11px]">
          <button className={dialogButton}><U>N</U>ext &gt;</button>
          <button className={dialogButton}><U>C</U>ancel</button>
        </div>
      </div>
    </div>
  );
};

/* ---------- Command line and status bar ---------- */

const CommandLine = () => (
  <div className="flex h-[35px] shrink-0 bg-[#f5f5f5] font-['DejaVu_Sans_Mono',monospace] text-[10px] text-[#3a3a3a]">
    <div className="flex w-[19px] shrink-0 flex-col items-center justify-end gap-[7px] bg-[#343e4e] pb-1">
      <Cross size={9} />
      <Svg w={10} h={9} stroke={LIGHT}>
        <path d="M1 8l1-3 5-4.500 2 2-5 4.500zM6 8.500h4" />
      </Svg>
    </div>
    <div className="flex min-w-0 flex-1 flex-col">
      <div className="flex h-[19px] border-b border-[#cacaca]">
        <div className="flex flex-1 flex-col justify-end overflow-hidden pl-0.5 leading-[13px]">
          <p>Command: Specify opposite corner or [Fence/WPolygon/CPolygon]: *Cancel*</p>
          <p>Command: *Cancel*</p>
        </div>
        <div className="w-[13px] bg-[#ececec]" />
      </div>
      <div className="flex h-4 items-center pr-[13px]">
        <label htmlFor="command" className="pl-0.5 whitespace-pre">Command: </label>
        <input id="command" defaultValue="DATAEXTRACTION" className="flex-1 bg-transparent outline-none" />
        <div className="flex h-4 w-[67px] items-center bg-[#ececec] pl-3.5">
          <div className="h-2 w-[15px] bg-[#868686]" />
        </div>
      </div>
    </div>
  </div>
);

const ANNO = "M6.200 1h1.600l.7 6L13 10.500v2.500H9l-2-2.500L5 13H1v-2.500L5.500 7z";

const statusIcons: { label: string; active?: boolean; icon: React.ReactNode }[] = [
  { label: "Snap", icon: <><path d="M3 0v12M7 0v12M11 0v8M0 3h13M0 7h13M0 11h8" /><circle cx="11.500" cy="11.500" r="1.500" fill={AZURE} stroke="none" /></> },
  { label: "Grid", active: true, icon: <path d="M3.500 1v12M7 1v12M10.500 1v12M1 3.500h12M1 7h12M1 10.500h12" /> },
  { label: "Dynamic input", active: true, icon: <><path d="M4 1v7M.5 4.500h7" /><path d="M7.500 8.500h5v4h-5z" fill="#8f959e" /></> },
  { label: "Ortho", icon: <path d="M3 1v11.500h10M3 8.500h4v4" /> },
  { label: "Polar", active: true, icon: <><circle cx="6.500" cy="7.500" r="5" /><path d="M6.500 7.500h6M6.500 7.500L12 2" /></> },
  { label: "Object snap", active: true, icon: <><path d="M1.500 2.500h9v10h-9z" /><circle cx="11.500" cy="2.500" r="1.700" fill={AZURE} stroke="none" /></> },
  { label: "Tracking", active: true, icon: <><path d="M2 12.500L12 1M1 12.500h12" /><path d="M3 3l7 7" stroke={AZURE} strokeWidth="1.300" /></> },
  { label: "Crosshair", icon: <path d="M5.500 1v6.500H0M8.500 12V5.500H13" strokeWidth="1.800" /> },
  { label: "Transparency", active: true, icon: <><path d="M2 1.500h10v11H2z" /><path d="M3 3h8M3 7h8M3 11h8" strokeWidth="2" strokeDasharray="2 1" /><path d="M4 5h7M4 9h7" strokeWidth="2" strokeDasharray="2 1" /></> },
  { label: "Cycling", active: true, icon: <><path d="M11 3.500A5 5 0 1 0 12 8M7 4.500v5M4.500 7h5" /><path d="M9 3.500h3v-3" /></> },
  { label: "Lineweight", icon: <><path d="M1 2h12M1 12h12" /><path d="M1 7h12" stroke={AZURE} strokeDasharray="1.500 1" /></> },
  { label: "Quick pick", icon: <><path d="M0 2h12" stroke={AZURE} strokeDasharray="1.500 1" /><path d="M6 5l6 5-2.500.3L11 13l-1.500.5-1-2.500L6.500 12z" fill="#dfe1e4" stroke="none" /></> },
  { label: "Layers", icon: <><path d="M6 1l5.500 2L6 5 .5 3zM.5 6l5.500 2 4-1.300M.5 9l5.500 2" /><path d="M11 6l-3 4h2l-1 4 4-5h-2l1.500-3z" fill={AZURE} stroke="none" /></> },
  { label: "Zoom", icon: <><circle cx="6" cy="6" r="5" /><path d="M9.500 9.500L13 13" strokeWidth="1.500" /><path d="M4 8.500h4.500V4" stroke={AZURE} /></> },
  { label: "Windows", active: true, icon: <><path d="M1 5h9v8H1z" fill={AZURE} stroke="none" /><path d="M5 1.500h8v7H5z" fill="#8fbfe8" stroke="#e2e6ea" /></> },
  { label: "Annotation scale", icon: <path d={ANNO} fill="#dfe1e4" stroke="none" /> },
];

const statusIconsAfter = [
  { label: "Annotation visibility", icon: <><path d={ANNO} fill="#c9ccd1" stroke="none" /><circle cx="11" cy="3" r="2.500" fill="#f28c1e" stroke="none" /></> },
  { label: "Auto scale", icon: <><path d={ANNO} fill="#c9ccd1" stroke="none" /><path d="M12 1L9 6h2l-1 3 4-5h-2z" fill={AZURE} stroke="none" /></> },
  { label: "Properties", icon: <><path d="M2 1h10v12H2z" fill="#dfe1e4" stroke="none" /><path d="M3 4h2M6 4h5M3 7h2M6 7h5M3 10h2M6 10h5" stroke="#2b303b" /></> },
];

const systemIcons = [
  { label: "Settings", icon: <><circle cx="7" cy="7" r="3.500" strokeWidth="2.500" stroke="#dfe1e4" /><path d="M7 1v2M7 11v2M1.800 4l1.700 1M10.500 9l1.700 1M1.800 10l1.700-1M10.500 5l1.700-1" stroke="#dfe1e4" strokeWidth="2.200" /></> },
  { label: "Lock", icon: <><path d="M1 6.500h9V13H1z" fill={AZURE} stroke="none" /><path d="M8 6.500V4a2.300 2.300 0 0 1 4.600 0v1.500" stroke={AZURE} strokeWidth="1.400" /></> },
  { label: "Hint", icon: <path d="M7 1a3.300 3.300 0 0 1 1.800 6l-.5 3.500h-2.600L5.200 7A3.300 3.300 0 0 1 7 1zM6 11.300h2V13H6z" fill={AZURE} stroke="none" /> },
  { label: "Performance", icon: <><circle cx="7" cy="7" r="5.500" stroke="#2476c5" strokeWidth="1.400" /><path d="M6 8.500L10 4" stroke="#7fb9ea" /><circle cx="6.500" cy="8" r="1" fill={AZURE} stroke="none" /></> },
  { label: "Full screen", icon: <path d="M1.500 1.500h11v11h-11zM4 10l6-6M7.500 4H10v2.500M4 7.500V10h2.500" /> },
  { label: "Links", icon: <><ellipse cx="4" cy="8.500" rx="3" ry="2" transform="rotate(-45 4 8.500)" /><ellipse cx="8" cy="4" rx="3" ry="2" transform="rotate(-45 8 4)" /><circle cx="11" cy="10.500" r="2" stroke={AZURE} strokeWidth="1.500" /></> },
];

const StatusBar = () => (
  <footer className="flex h-[25px] shrink-0 items-center text-[9px] text-[#959ba4]">
    <button aria-label="Layout menu" className="pl-1"><Hamburger /></button>
    <button className="ml-2.5 h-[18px] w-10 rounded-[2px] bg-[#3b4554] font-bold text-white">Model</button>
    <button className="ml-1.5 border-r border-[#5b626d] pr-1.5 leading-3">Layout1</button>
    <button className="ml-1.5 border-r border-[#5b626d] pr-1.5 leading-3">Layout2</button>
    <button aria-label="Add layout" className="ml-[9px]"><Plus /></button>

    <span className="ml-auto pr-1.5 text-[#e3e5e8]">2951.6215, 1604.1646, 0.0000</span>
    {statusIcons.map((s) => (
      <button key={s.label} aria-label={s.label} className="flex w-5 justify-center">
        <span
          className={clsx(
            "flex h-5 w-[18px] items-center justify-center rounded-[4px] border",
            s.active ? "border-[#2b4c94] bg-[#23345a]" : "border-transparent"
          )}
        >
          <Svg w={14} h={14} stroke="#b5b9bf">{s.icon}</Svg>
        </span>
      </button>
    ))}
    <button className="flex w-6 items-center justify-center gap-0.5 text-[#e3e5e8]">
      1:1
      <Caret fill="#fff" />
    </button>
    {statusIconsAfter.map((s) => (
      <button key={s.label} aria-label={s.label} className="flex w-5 justify-center">
        <Svg w={14} h={14}>{s.icon}</Svg>
      </button>
    ))}
    <div className="flex pr-12 pl-[38px]">
      {systemIcons.map((s) => (
        <button key={s.label} aria-label={s.label} className="flex w-4 justify-center">
          <Svg w={14} h={14} stroke="#b5b9bf">{s.icon}</Svg>
        </button>
      ))}
    </div>
  </footer>
);

export default function App() {
  return (
    <div className="h-screen bg-white pr-[3px] pb-0.5 pl-0.5 font-['Noto_Sans',sans-serif]">
      <div className="flex h-full flex-col overflow-hidden rounded-[14px] bg-[#2b303b]">
        <Header />
        <Ribbon />

        {/* Document tabs */}
        <div className="mt-1.5 flex h-5 shrink-0 items-center border-b border-[#74777c] pl-1">
          <button aria-label="Documents"><Hamburger /></button>
          <div className="ml-2.5 flex h-full w-24 items-center justify-between rounded-t-[2px] bg-[#384352] pr-0.5 pl-[5px]">
            <button className="text-[9px] font-bold whitespace-nowrap text-white">Data Extraction*</button>
            <button aria-label="Close document"><Cross size={10} /></button>
          </div>
          <button aria-label="New document" className="ml-2"><Plus /></button>
        </div>

        <main className="relative flex flex-1 items-center justify-center bg-[#222831]">
          <Drawing />
          <Compass />
          <div className="relative pb-[14px] pl-[3px]">
            <DataExtractionDialog />
          </div>
        </main>

        <div className="h-[5px] shrink-0 border-t border-[#b4b7bc]" />
        <CommandLine />
        <StatusBar />
      </div>
    </div>
  );
}
